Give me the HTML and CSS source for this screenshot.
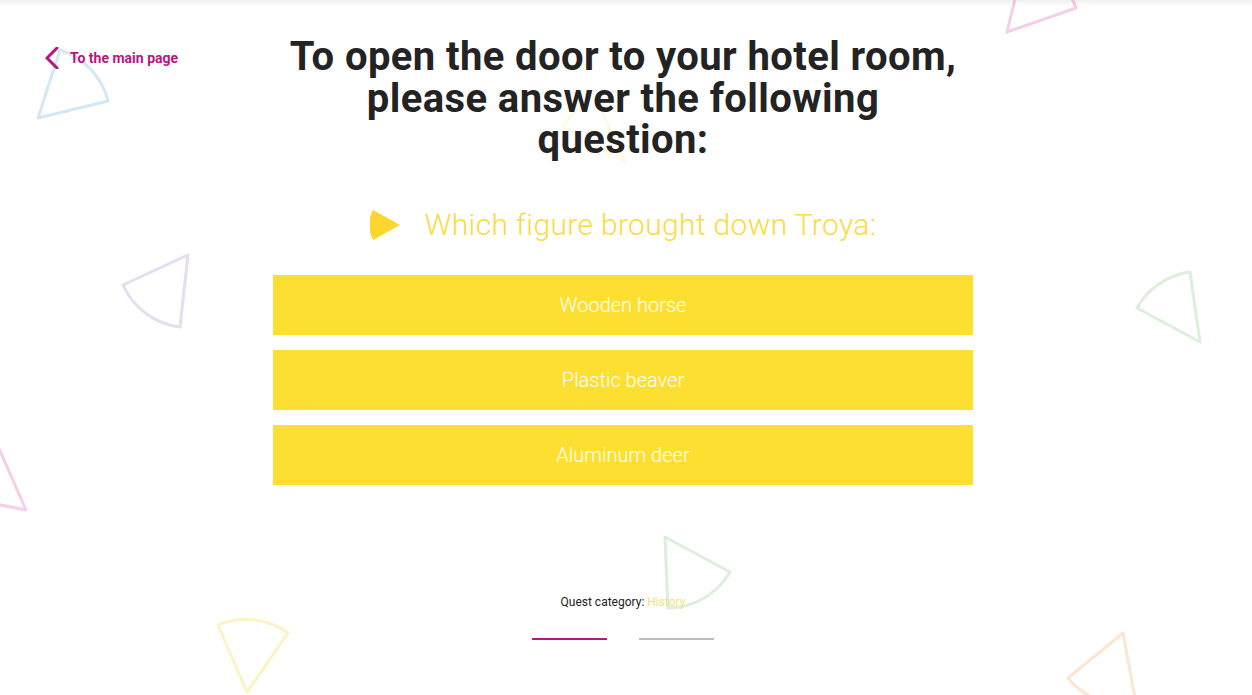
FILE: index.html
```html
<!DOCTYPE html>
<html lang="en">
<head>
<meta charset="utf-8">
<title>Hotel quest</title>
<link rel="stylesheet" href="styles.css">
</head>
<body>
<svg class="decor" width="1252" height="695" viewBox="0 0 1252 695" aria-hidden="true">
  <g fill="none" stroke-width="3" stroke-linejoin="round">
    <path class="s-blue" d="M38 118 L60 50 A72 72 0 0 1 108 101 Z"/>
    <path class="s-yellow-faint" d="M625 162 L563 127 A71 71 0 0 1 595 97 Z"/>
    <path class="s-purple" d="M188 255 L123 285 A72 72 0 0 0 180 327 Z"/>
    <path class="s-green" d="M1200 342 L1190 272 A71 71 0 0 0 1137 308 Z"/>
    <path class="s-pink" d="M26 510 L-3 444 A72 72 0 0 0 -45 496 Z"/>
    <path class="s-pink" d="M1007 32 L1076 8 A73 73 0 0 0 1024 -38 Z"/>
    <path class="s-green" d="M665 537 L730 572 A72 72 0 0 1 668 608 Z"/>
    <path class="s-yellow" d="M247 692 L218 625 A72 72 0 0 1 288 633 Z"/>
    <path class="s-orange" d="M1123 633 L1068 678 A71 71 0 0 0 1136 703 Z"/>
  </g>
</svg>
<div class="topshade"></div>
<div class="page">
  <div class="side">
    <a class="back" href="#">
      <svg class="chev" width="14" height="22" viewBox="0 0 14 22"><path d="M12 1 L2 11 L12 21" fill="none" stroke="#b9157e" stroke-width="3" stroke-linecap="round" stroke-linejoin="round"/></svg>
      <span>To the main page</span>
    </a>
  </div>
  <main class="main">
    <h1 class="title">To open the door to your hotel room, please answer the following question:</h1>
    <div class="question">
      <svg class="qicon" width="31" height="32" viewBox="0 0 31 32"><path d="M30 16 L3 1 A31 31 0 0 0 3 31 Z" fill="#fcd62f"/></svg>
      <span>Which figure brought down Troya:</span>
    </div>
    <div class="answers">
      <button class="answer">Wooden horse</button>
      <button class="answer">Plastic beaver</button>
      <button class="answer">Aluminum deer</button>
    </div>
    <p class="category">Quest category: <span class="cat-name">History</span></p>
    <div class="steps">
      <span class="step active"></span>
      <span class="step"></span>
    </div>
  </main>
</div>
</body>
</html>
```
FILE: styles.css
```css
html, body {
  margin: 0;
  padding: 0;
  height: 100%;
  overflow: hidden;
  background: #fff;
  font-family: Roboto, "Liberation Sans", sans-serif;
}

.decor {
  position: absolute;
  top: 0;
  left: 0;
  z-index: 0;
}

.s-blue { stroke: #d3e8f3; }
.s-purple { stroke: #e8dcef; }
.s-green { stroke: #dcefdc; }
.s-pink { stroke: #f4cfe6; }
.s-yellow { stroke: #fcf3c4; }
.s-yellow-faint { stroke: #fef9e4; }
.s-orange { stroke: #fbe6d2; }

.topshade {
  position: absolute;
  top: 0;
  left: 0;
  right: 0;
  height: 7px;
  background: linear-gradient(rgba(0,0,0,0.06), rgba(0,0,0,0));
  z-index: 2;
}

.page {
  position: relative;
  z-index: 1;
  display: grid;
  grid-template-columns: 273px 700px 1fr;
  padding-top: 36px;
}

.side {
  padding-left: 45px;
  padding-top: 11px;
}

.back {
  display: inline-flex;
  align-items: center;
  gap: 11px;
  color: #b9157e;
  text-decoration: none;
  font-weight: 700;
  font-size: 14px;
  letter-spacing: 0;
  line-height: 22px;
}

.chev { display: block; }

.main {
  display: flex;
  flex-direction: column;
  align-items: center;
}

.title {
  margin: 0;
  width: 682px;
  text-align: center;
  font-size: 40px;
  line-height: 41.5px;
  font-weight: 700;
  letter-spacing: 0.4px;
  color: #232323;
}

.question {
  margin-top: 46px;
  display: flex;
  align-items: center;
  gap: 24px;
  color: #fadb42;
  font-size: 30px;
  font-weight: 300;
  letter-spacing: 0.35px;
  line-height: 36px;
}

.qicon { display: block; }

.answers {
  margin-top: 32px;
  width: 100%;
  display: flex;
  flex-direction: column;
  gap: 15px;
}

.answer {
  height: 60px;
  border: 0;
  background: #fddf32;
  color: #fff;
  font-family: Roboto, "Liberation Sans", sans-serif;
  font-size: 20px;
  font-weight: 300;
  cursor: pointer;
}

.category {
  margin: 110px 0 0;
  font-size: 12px;
  line-height: 14px;
  color: #222;
}

.cat-name { color: #f5e27a; }

.steps {
  margin-top: 29px;
  display: flex;
  gap: 32px;
}

.step {
  width: 75px;
  height: 2px;
  background: #bcbcbc;
}

.step.active { background: #b5167f; }
```
